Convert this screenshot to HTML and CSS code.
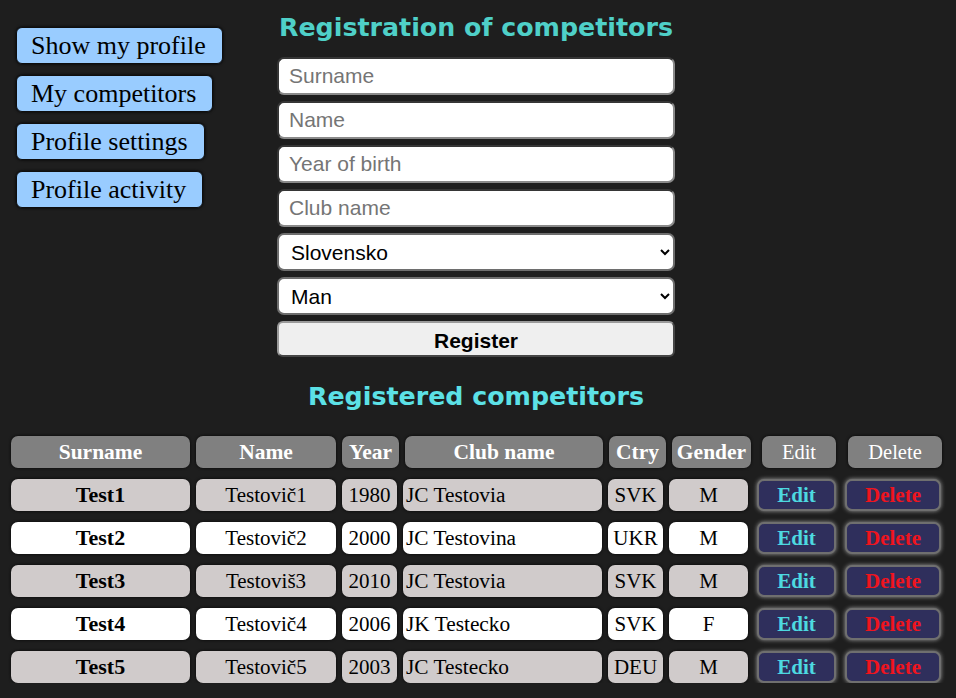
FILE: index.html
```html
<!DOCTYPE html>
<html>
<head>
<meta charset="utf-8">
<link rel="stylesheet" href="styles.css">
</head>
<body>
<div class="top">
  <nav class="nav">
    <button class="nav-btn">Show my profile</button>
    <button class="nav-btn">My competitors</button>
    <button class="nav-btn">Profile settings</button>
    <button class="nav-btn">Profile activity</button>
  </nav>
  <form class="reg">
    <h1 class="title">Registration of competitors</h1>
    <input class="field" type="text" placeholder="Surname">
    <input class="field" type="text" placeholder="Name">
    <input class="field" type="text" placeholder="Year of birth">
    <input class="field" type="text" placeholder="Club name">
    <select class="field sel"><option>Slovensko</option></select>
    <select class="field sel"><option>Man</option></select>
    <button class="register" type="button">Register</button>
  </form>
</div>
<h2 class="title2">Registered competitors</h2>
<div class="table">
  <div class="row head">
    <div class="th">Surname</div>
    <div class="th">Name</div>
    <div class="th">Year</div>
    <div class="th">Club name</div>
    <div class="th">Ctry</div>
    <div class="th">Gender</div>
    <div class="th act edit-h">Edit</div>
    <div class="th act del-h">Delete</div>
  </div>
  <div class="row data odd">
    <div class="td b">Test1</div><div class="td">Testovič1</div><div class="td">1980</div><div class="td l">JC Testovia</div><div class="td">SVK</div><div class="td">M</div>
    <button class="abtn edit">Edit</button><button class="abtn del">Delete</button>
  </div>
  <div class="row data even">
    <div class="td b">Test2</div><div class="td">Testovič2</div><div class="td">2000</div><div class="td l">JC Testovina</div><div class="td">UKR</div><div class="td">M</div>
    <button class="abtn edit">Edit</button><button class="abtn del">Delete</button>
  </div>
  <div class="row data odd">
    <div class="td b">Test3</div><div class="td">Testoviš3</div><div class="td">2010</div><div class="td l">JC Testovia</div><div class="td">SVK</div><div class="td">M</div>
    <button class="abtn edit">Edit</button><button class="abtn del">Delete</button>
  </div>
  <div class="row data even">
    <div class="td b">Test4</div><div class="td">Testovič4</div><div class="td">2006</div><div class="td l">JK Testecko</div><div class="td">SVK</div><div class="td">F</div>
    <button class="abtn edit">Edit</button><button class="abtn del">Delete</button>
  </div>
  <div class="row data odd">
    <div class="td b">Test5</div><div class="td">Testovič5</div><div class="td">2003</div><div class="td l">JC Testecko</div><div class="td">DEU</div><div class="td">M</div>
    <button class="abtn edit">Edit</button><button class="abtn del">Delete</button>
  </div>
</div>
</body>
</html>
```
FILE: styles.css
```css
html, body {
  margin: 0;
  padding: 0;
  background: #1e1e1e;
}
body {
  padding-top: 14px;
  font-family: "Liberation Serif", "Times New Roman", serif;
}
.top {
  display: grid;
  grid-template-columns: 277px 398px 1fr;
}
.nav {
  display: flex;
  flex-direction: column;
  align-items: flex-start;
  gap: 11px;
  padding: 13px 0 0 16px;
}
.nav-btn {
  height: 37px;
  padding: 0 16px 0 14px;
  background: #99ccff;
  border: 1px solid #0e0e0e;
  border-radius: 6px;
  box-shadow: 0 0 3px #000;
  font-family: "Liberation Serif", serif;
  font-size: 26px;
  color: #000;
  line-height: 35px;
  text-align: left;
}
.reg {
  display: flex;
  flex-direction: column;
  gap: 6px;
  margin: 0;
}
.title {
  margin: 0;
  height: 37px;
  font-family: "DejaVu Sans", Verdana, sans-serif;
  font-weight: bold;
  font-size: 25.3px;
  color: #4fd0c8;
  text-align: center;
  line-height: 28px;
  white-space: nowrap;
}
.field {
  box-sizing: border-box;
  width: 398px;
  height: 38px;
  margin: 0;
  padding: 0 10px;
  border: 2px inset #8a8a8a;
  border-radius: 7px;
  background: #fff;
  font-family: "Liberation Sans", Arial, sans-serif;
  font-size: 21px;
  color: #000;
}
.field::placeholder {
  color: #757575;
}
.sel {
  padding: 0 6px 0 8px;
  border: 2px solid #6e6e6e;
}
.register {
  box-sizing: border-box;
  width: 398px;
  height: 36px;
  margin: 0;
  border: 2px outset #9a9a9a;
  border-radius: 6px;
  background: #efefef;
  font-family: "Liberation Sans", Arial, sans-serif;
  font-weight: bold;
  font-size: 21px;
  line-height: 34px;
  padding-top: 1px;
  color: #000;
}
.title2 {
  margin: 26px 0 0 0;
  padding-right: 4px;
  height: 53px;
  font-family: "DejaVu Sans", Verdana, sans-serif;
  font-weight: bold;
  font-size: 25.3px;
  color: #5ce1e6;
  text-align: center;
  line-height: 28px;
}
.table {
  padding-left: 11px;
  display: flex;
  flex-direction: column;
  gap: 11px;
}
.row {
  display: grid;
  column-gap: 6px;
  height: 32px;
}
.head {
  grid-template-columns: 179px 140px 57px 198px 57px 79px 79px 100px;
}
.data {
  grid-template-columns: 179px 140px 55px 199px 55px 79px 82px 99px;
}
.th, .td {
  border-radius: 7px;
  font-size: 21px;
  line-height: 32px;
  text-align: center;
  white-space: nowrap;
  box-shadow: 0 0 3px #050505;
}
.th {
  background: #808080;
  color: #fff;
  font-weight: bold;
  font-size: 21.5px;
}
.th.act {
  font-weight: normal;
  font-size: 20.5px;
  justify-self: end;
}
.edit-h { width: 74px; }
.del-h { width: 94px; }
.odd .td { background: #d0cbcb; }
.even .td { background: #fff; }
.td { color: #000; }
.td.b { font-weight: bold; font-size: 22px; }
.td.l { text-align: left; padding-left: 3px; font-size: 21.33px; }
.abtn {
  justify-self: end;
  box-sizing: border-box;
  height: 32px;
  margin: 0;
  padding: 0;
  background: #2f2f5c;
  border: 2px solid #6f6f6f;
  border-radius: 7px;
  box-shadow: 0 0 4px #9a9a9a;
  font-family: "Liberation Serif", serif;
  font-weight: bold;
  font-size: 21px;
  line-height: 28px;
}
.abtn.edit { width: 79px; color: #4dd9e0; }
.abtn.del { width: 96px; color: #f0141e; }
```
